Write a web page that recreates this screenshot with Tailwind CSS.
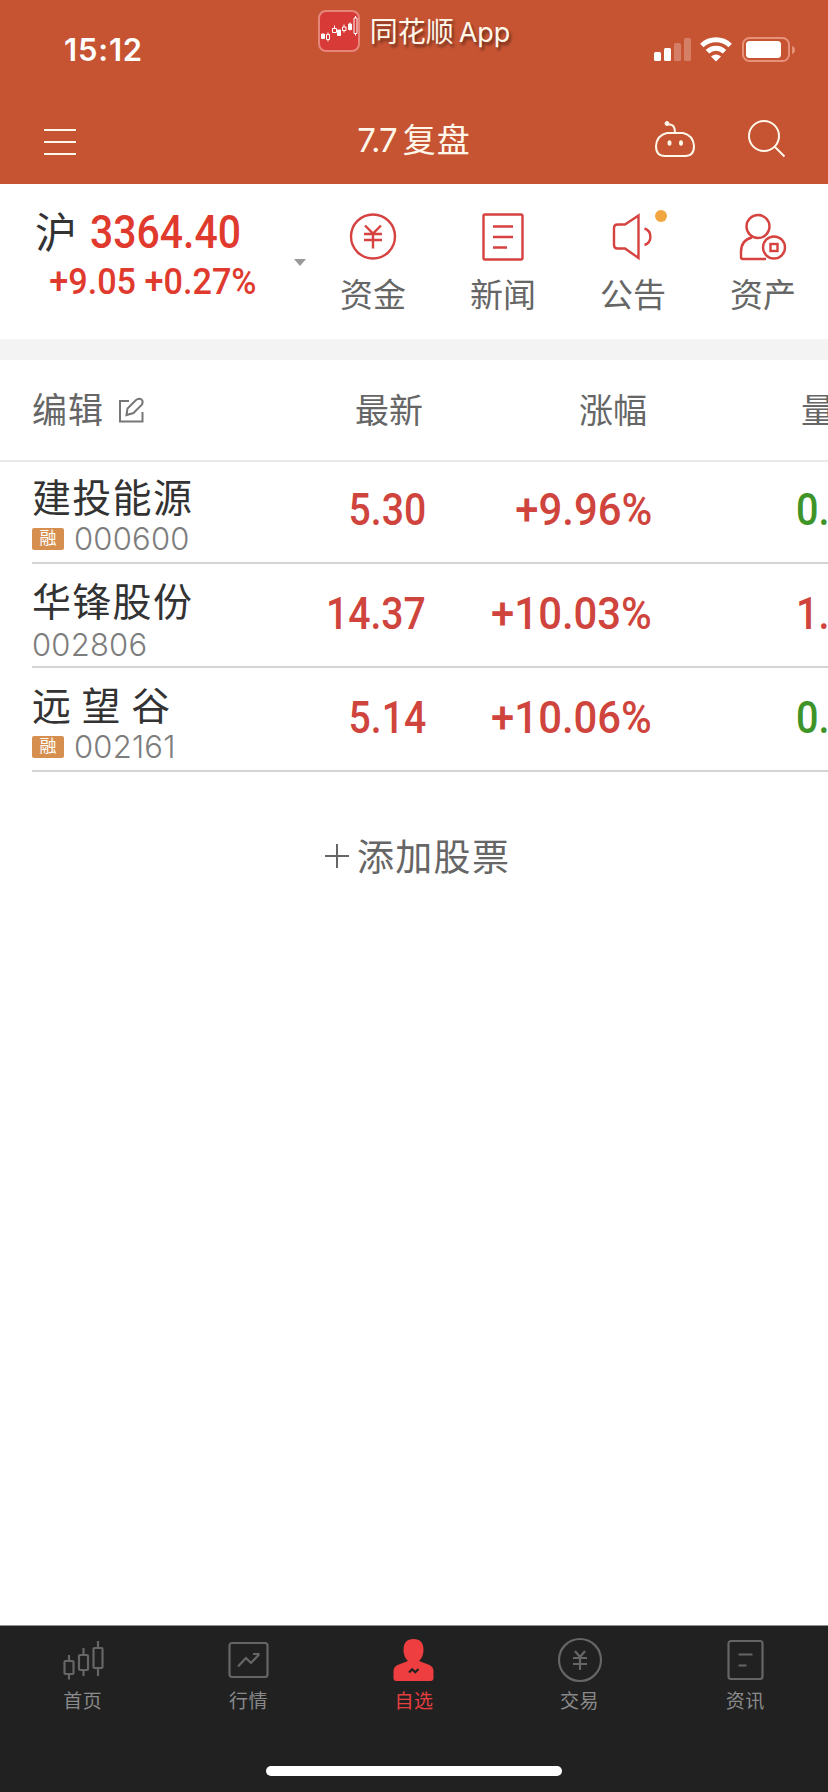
<!DOCTYPE html>
<html lang="zh-CN">

<head>
    <meta charset="UTF-8">
    <meta name="viewport" content="width=device-width, initial-scale=1.0">
    <title>自选</title>
    <script src="https://cdn.jsdelivr.net/npm/@tailwindcss/browser@4"></script>
</head>

<body class="bg-white font-['Inter','Noto_Sans_CJK_SC',sans-serif] overflow-hidden">
    <div class="w-[828px] h-[1792px] flex flex-col overflow-hidden">

        <!-- Header -->
        <header class="h-[184px] shrink-0 bg-[#c65433] text-[#fff8ea]">
            <!-- Status bar -->
            <div class="h-[98px] flex justify-between">
                <div class="w-[316px] pl-[64px] pt-[27px] text-[31px] leading-[46px] tracking-[0.8px] font-semibold text-white">15:12</div>
                <div class="flex pt-[10px]">
                    <svg class="w-[42px] h-[42px]" viewBox="0 0 42 42" fill="none">
                        <rect x="1" y="1" width="40" height="40" rx="7" fill="#d83a37" stroke="#e8857a" stroke-width="2" />
                        <g stroke="#fff" stroke-width="1">
                            <path d="M3.500 24h3v4.500h-3zM19.500 20h3v5.500h-3zM30.500 14h3v5.500h-3z" fill="#fff" />
                            <path d="M8.500 24.500h3v5h-3zM10 22.500v2M10 29.500v2M14.500 18.500h4v4h-4zM16.500 15.500v3M24.500 17h3.500v3.500h-3.500zM26 14.500v2.500M26 20.500v2M32 12.500v8M36 8h3v15.500h-3zM37.500 6v2M37.500 23.500v2" />
                        </g>
                    </svg>
                    <div class="pl-[10px] text-[28px] leading-[42px] mt-px whitespace-nowrap [text-shadow:2px_3px_3px_rgb(0_0_0/0.45)]">同花顺<span class="ml-[5px] text-[27px]">App</span></div>
                </div>
                <div class="w-[316px] flex justify-end gap-[10px] pr-[32px] pt-[36px]">
                    <svg class="w-[38px] h-[26px] -mr-[2px]" viewBox="0 0 38 26" fill="#fff">
                        <rect x="0" y="16" width="7" height="9" rx="1.500" />
                        <rect x="10" y="12" width="7" height="13" rx="1.500" />
                        <rect x="20" y="7" width="7" height="18" rx="1.500" opacity=".25" />
                        <rect x="30" y="2" width="7" height="23" rx="1.500" opacity=".25" />
                    </svg>
                    <svg class="w-[32px] h-[26px]" viewBox="0 0 32 26" fill="none" stroke="#fff" stroke-width="5">
                        <path d="M1.800 9.500Q8 3.800 16 3.800T30.200 9.500" />
                        <path d="M7.500 15.800Q11 12.300 16 12.300T24.500 15.800" />
                        <path d="M11 20.500Q16 16.500 21 20.500L16 25.500z" fill="#fff" stroke="none" />
                    </svg>
                    <svg class="w-[54px] h-[26px]" viewBox="0 0 54 26">
                        <rect x="1" y="2" width="46" height="23" rx="6.500" fill="none" stroke="#e8917a" stroke-width="2" />
                        <rect x="4" y="5" width="35" height="17" rx="3.500" fill="#fff" />
                        <path d="M50 10q3 1 3 4t-3 4z" fill="#e8917a" />
                    </svg>
                </div>
            </div>
            <!-- Title bar -->
            <div class="h-[86px] flex justify-between">
                <div class="w-[300px] pl-[44px] pt-[31px]">
                    <div class="w-[32px] h-[26px] flex flex-col justify-between">
                        <div class="h-[2px] bg-[#fff8ea]"></div>
                        <div class="h-[2px] bg-[#fff8ea]"></div>
                        <div class="h-[2px] bg-[#fff8ea]"></div>
                    </div>
                </div>
                <h1 class="pt-[19px] text-[33px] leading-[46px] whitespace-nowrap"><span class="tracking-[-1px] mr-[6px]">7.7</span><span class="tracking-[1px]">复盘</span></h1>
                <div class="w-[300px] flex justify-end gap-[50px] pr-[41px] pt-[21px]">
                    <svg class="w-[44px] h-[44px]" viewBox="0 0 44 44" fill="none" stroke="#fff8ea" stroke-width="2">
                        <path d="M14 14h16q10 2 11 13 0 10-9 10H12q-9 0-9-10 1-11 11-13z" />
                        <path d="M15 5.500q7-1 7 8" />
                        <circle cx="14" cy="4.500" r="2" fill="#fff8ea" stroke-width="1" />
                        <ellipse cx="16.500" cy="24" rx="2" ry="2.800" fill="#fff8ea" stroke="none" />
                        <ellipse cx="28" cy="24" rx="2" ry="2.800" fill="#fff8ea" stroke="none" />
                    </svg>
                    <svg class="w-[40px] h-[44px]" viewBox="0 0 40 44" fill="none" stroke="#fff8ea" stroke-width="2">
                        <circle cx="17" cy="17" r="15" />
                        <path d="M27.500 27.500L37.500 37.500" />
                    </svg>
                </div>
            </div>
        </header>

        <!-- Index summary and shortcuts -->
        <section class="h-[155px] shrink-0 flex">
            <div class="w-[308px] flex">
                <div class="w-[286px] pl-[35px] font-medium font-['Roboto','Noto_Sans_CJK_SC',sans-serif] text-[#e03a2e] whitespace-nowrap">
                    <div class="h-[76px] pt-[20px] flex items-baseline leading-[56px]">
                        <span class="w-[55px] text-[42px] font-normal text-[#333]">沪</span>
                        <span class="text-[46px] origin-left scale-x-[0.89]">3364.40</span>
                    </div>
                    <div class="pl-[15px] text-[36px] leading-[44px] origin-left scale-x-[0.95]">+9.05 +0.27%</div>
                </div>
                <svg class="w-[14px] h-[8px] mt-[75px] ml-[7px]" viewBox="0 0 14 8" fill="#999">
                    <path d="M1 0h12L7 7z" />
                </svg>
            </div>
            <nav class="w-[520px] flex text-[33px] leading-[46px] text-[#666]">
                <a class="w-[130px] flex flex-col items-center gap-[11px] pt-[27px]">
                    <svg class="w-[50px] h-[50px]" viewBox="0 0 50 50" fill="none" stroke="#d6423f" stroke-width="2.400">
                        <circle cx="25" cy="25.500" r="22" />
                        <path d="M17 14.500l8 8 8-8M16 23h18M16 29h18M25 22.500v15" />
                    </svg>
                    <span>资金</span>
                </a>
                <a class="w-[130px] flex flex-col items-center gap-[11px] pt-[27px]">
                    <svg class="w-[50px] h-[50px]" viewBox="0 0 50 50" fill="none" stroke="#d6423f" stroke-width="2.400">
                        <rect x="5.500" y="3.500" width="39" height="45" rx="1.500" />
                        <path d="M15 15.500h20M15 26h20M15 36.500h14" />
                    </svg>
                    <span>新闻</span>
                </a>
                <a class="w-[130px] flex flex-col items-center gap-[11px] pt-[27px] relative">
                    <svg class="w-[50px] h-[50px]" viewBox="0 0 50 50" fill="none" stroke="#d6423f" stroke-width="2.400">
                        <path d="M17 13.500L30.500 4.500v42.500L17 37.500H9.500q-3.500 0-3.500-3.500V17q0-3.500 3.500-3.500z" />
                        <path d="M36.500 17.500a8.700 8.700 0 0 1 0 16.500" />
                    </svg>
                    <span>公告</span>
                    <span class="absolute left-[87px] top-[26px] w-3 h-3 rounded-full bg-[#f2a640]"></span>
                </a>
                <a class="w-[130px] flex flex-col items-center gap-[11px] pt-[27px]">
                    <svg class="w-[50px] h-[50px]" viewBox="0 0 50 50" fill="none" stroke="#d6423f" stroke-width="2.400">
                        <circle cx="20" cy="15.500" r="11.500" />
                        <path d="M14 26.500Q3 29 3 41v5q0 2 2 2h23" />
                        <circle cx="36" cy="36.500" r="11" />
                        <rect x="32.500" y="33" width="7" height="7" />
                    </svg>
                    <span>资产</span>
                </a>
            </nav>
        </section>

        <div class="h-[21px] shrink-0 bg-[#f3f3f3]"></div>

        <!-- Stock table -->
        <section class="shrink-0 *:overflow-hidden">
            <div class="h-[102px] border-b-2 border-[#e9e9e9] flex text-[34px] leading-[46px] text-[#666] pt-[28px] *:shrink-0">
                <div class="w-[240px] pl-[32px] flex text-[35px] tracking-[1px] -mt-px">
                    编辑
                    <svg class="w-[28px] h-[28px] mt-[9px] ml-[14px]" viewBox="0 0 28 28" fill="none" stroke="#777" stroke-width="2">
                        <path d="M11 5H2v20.500h22.500V16" />
                        <path d="M8.500 19l1-6.500L18 4q3.500-2 5.500-.500t.500 5L15.500 17z" />
                    </svg>
                </div>
                <div class="w-[183px] text-right">最新</div>
                <div class="w-[224px] text-right">涨幅</div>
                <div class="pl-[154px] whitespace-nowrap">量比</div>
            </div>

            <div class="ml-[32px] h-[102px] border-b-2 border-[#d4d4d4] flex *:shrink-0">
                <div class="w-[208px]">
                    <div class="pt-[11px] h-[60px] text-[39px] leading-[50px] tracking-[1.3px] text-[#333]">建投能源</div>
                    <div class="flex items-center h-[34px]">
                        <span class="w-[32px] h-[22px] mr-[10px] rounded-[2px] bg-[#d68f4f] text-white text-[17px] leading-[21px] text-center">融</span>
                        <span class="text-[31px] tracking-[0.2px] font-light text-[#7d7d7d]">000600</span>
                    </div>
                </div>
                <div class="w-[186px] pt-[21px] flex justify-end text-[45px] leading-[54px] font-medium font-['Roboto'] text-[#cf443c]"><span class="origin-right scale-x-[0.87]">5.30</span></div>
                <div class="w-[226px] pt-[21px] flex justify-end text-[45px] leading-[54px] font-medium font-['Roboto'] text-[#cf443c]"><span class="origin-right scale-x-[0.93]">+9.96%</span></div>
                <div class="pl-[144px] pt-[21px] text-[45px] leading-[54px] font-medium font-['Roboto'] text-[#3f9429]"><span class="block origin-left scale-x-[0.88]">0.90</span></div>
            </div>

            <div class="ml-[32px] h-[104px] border-b-2 border-[#d4d4d4] flex *:shrink-0">
                <div class="w-[208px]">
                    <div class="pt-[13px] h-[62px] text-[39px] leading-[50px] tracking-[1.3px] text-[#333]">华锋股份</div>
                    <div class="flex items-center h-[38px]">
                        <span class="text-[31px] tracking-[0.2px] font-light text-[#7d7d7d]">002806</span>
                    </div>
                </div>
                <div class="w-[186px] pt-[23px] flex justify-end text-[45px] leading-[54px] font-medium font-['Roboto'] text-[#cf443c]"><span class="origin-right scale-x-[0.87]">14.37</span></div>
                <div class="w-[226px] pt-[23px] flex justify-end text-[45px] leading-[54px] font-medium font-['Roboto'] text-[#cf443c]"><span class="origin-right scale-x-[0.93]">+10.03%</span></div>
                <div class="pl-[144px] pt-[23px] text-[45px] leading-[54px] font-medium font-['Roboto'] text-[#cf443c]"><span class="block origin-left scale-x-[0.88]">1.20</span></div>
            </div>

            <div class="ml-[32px] h-[104px] border-b-2 border-[#d4d4d4] flex *:shrink-0">
                <div class="w-[208px]">
                    <div class="pt-[13px] h-[62px] text-[39px] leading-[50px] tracking-[1.3px] [word-spacing:-3px] text-[#333]">远 望 谷</div>
                    <div class="flex items-center h-[34px]">
                        <span class="w-[32px] h-[22px] mr-[10px] rounded-[2px] bg-[#d68f4f] text-white text-[17px] leading-[21px] text-center">融</span>
                        <span class="text-[31px] tracking-[0.2px] font-light text-[#7d7d7d]">002161</span>
                    </div>
                </div>
                <div class="w-[186px] pt-[23px] flex justify-end text-[45px] leading-[54px] font-medium font-['Roboto'] text-[#cf443c]"><span class="origin-right scale-x-[0.87]">5.14</span></div>
                <div class="w-[226px] pt-[23px] flex justify-end text-[45px] leading-[54px] font-medium font-['Roboto'] text-[#cf443c]"><span class="origin-right scale-x-[0.93]">+10.06%</span></div>
                <div class="pl-[144px] pt-[23px] text-[45px] leading-[54px] font-medium font-['Roboto'] text-[#3f9429]"><span class="block origin-left scale-x-[0.88]">0.90</span></div>
            </div>
        </section>

        <!-- Add stock -->
        <div class="grow flex pl-[324px] pt-[59px] text-[37px] leading-[54px] tracking-[1.3px] text-[#666]">
            <svg class="w-[26px] h-[26px] mt-[12px] mr-[7px]" viewBox="0 0 26 26" fill="none" stroke="#666" stroke-width="2">
                <path d="M1 13h24M13 1v24" />
            </svg>
            添加股票
        </div>

        <!-- Tab bar -->
        <footer class="h-[167px] shrink-0 bg-[#212121] border-t border-[#8d9490] flex flex-col items-center">
            <nav class="w-full h-[140px] grid grid-cols-5 text-[19px] leading-[28px] tracking-[0.5px] text-[#8a8a8a] pt-[8px]">
                <a class="flex flex-col items-center gap-[2px]">
                    <svg class="w-[52px] h-[52px]" viewBox="0 0 52 52" fill="none" stroke="#666" stroke-width="2.200">
                        <rect x="7.500" y="27" width="9" height="13" rx="1" />
                        <path d="M12 21v6M12 40v5.500M26.500 14v7M26.500 36v6M41 7v7M41 34v8" />
                        <rect x="22" y="21" width="9" height="15" rx="1" />
                        <rect x="36.500" y="14" width="9" height="20" rx="1" />
                    </svg>
                    <span>首页</span>
                </a>
                <a class="flex flex-col items-center gap-[2px]">
                    <svg class="w-[52px] h-[52px]" viewBox="0 0 52 52" fill="none" stroke="#666" stroke-width="2.200">
                        <rect x="7.500" y="9" width="38" height="34" rx="2.500" />
                        <path d="M16 32.500l8-8.500 5 5 8-8.500M31 20h6.500" />
                    </svg>
                    <span>行情</span>
                </a>
                <a class="flex flex-col items-center gap-[2px] text-[#e63e40]">
                    <svg class="w-[52px] h-[52px]" viewBox="0 0 52 52">
                        <path d="M25.500 5q10 0 10 11 0 7-4.500 11l10.500 4q4 2 4 6v7q0 3-3 3h-34q-3 0-3-3v-7q0-4 4-6l10.500-4q-4.500-4-4.500-11 0-11 10-11z" fill="#ef3e40" />
                        <path d="M21 38.500l3.200-3.200 3 3 3.300-3.300" fill="none" stroke="#212121" stroke-width="2.200" />
                    </svg>
                    <span>自选</span>
                </a>
                <a class="flex flex-col items-center gap-[2px]">
                    <svg class="w-[52px] h-[52px]" viewBox="0 0 52 52" fill="none" stroke="#666" stroke-width="2.200">
                        <circle cx="26" cy="26" r="21" />
                        <path d="M21 17l5 6 5-6M19 24h14M19 30h14M26 23v13" />
                    </svg>
                    <span>交易</span>
                </a>
                <a class="flex flex-col items-center gap-[2px]">
                    <svg class="w-[52px] h-[52px]" viewBox="0 0 52 52" fill="none" stroke="#666" stroke-width="2.200">
                        <rect x="9.500" y="7" width="34" height="38" rx="2.500" />
                        <path d="M19.500 20.500h14M19.500 31.500h8" />
                    </svg>
                    <span>资讯</span>
                </a>
            </nav>
            <div class="w-[296px] h-[10px] rounded-full bg-white"></div>
        </footer>
    </div>
</body>

</html>
